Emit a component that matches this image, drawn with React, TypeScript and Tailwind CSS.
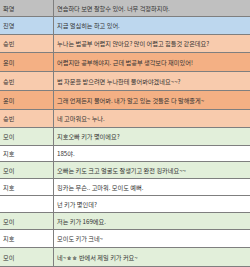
type Row = {
  who: string;
  line: string;
  tone: string;
};

const rows: Row[] = [
  { who: "화영", line: "연습하다 보면 잘할수 있어. 너무 걱정하지마.", tone: "bg-[#c0c0c0] h-[17px]" },
  { who: "진영", line: "지금 열심히는 하고 있어.", tone: "bg-[#bdd7ee] h-[18px]" },
  { who: "승빈", line: "누나는 법공부 어렵지 않아요? 많이 어렵고 힘들것 같은데요?", tone: "bg-[#f8cbad] h-[18px]" },
  { who: "윤미", line: "어렵지만 공부해야지. 근데 법공부 생각보다 재미있어!", tone: "bg-[#f4b084] h-[19px]" },
  { who: "승빈", line: "법 자문을 받으려면 누나한테 물어봐야겠네요~~?", tone: "bg-[#f8cbad] h-[19px]" },
  { who: "윤미", line: "그래 언제든지 물어봐. 내가 알고 있는 것들은 다 말해줄게~", tone: "bg-[#f4b084] h-[19px]" },
  { who: "승빈", line: "네 고마워요~ 누나.", tone: "bg-[#f8cbad] h-[18px]" },
  { who: "모이", line: "지호오빠 키가 몇이에요?", tone: "bg-[#e2efda] h-[18px]" },
  { who: "지호", line: "185야.", tone: "bg-white h-[16px]" },
  { who: "모이", line: "오빠는 키도 크고 얼굴도 잘생기고 완전 킹카네요~~", tone: "bg-[#e2efda] h-[17px]" },
  { who: "지호", line: "킹카는 무슨.. 고마워. 모이도 예뻐.", tone: "bg-white h-[17px]" },
  { who: "", line: "넌  키가 몇인데?", tone: "bg-white h-[17px]" },
  { who: "모이", line: "저는 키가 169에요.", tone: "bg-[#e2efda] h-[17px]" },
  { who: "지호", line: "모이도 키가 크네~", tone: "bg-white h-[18px]" },
  { who: "모이", line: "네~ㅎㅎ 반에서 제일 키가 커요~", tone: "bg-[#e2efda] h-[19px]" },
];

const ChatRow = ({ who, line, tone }: Row) => {
  return (
    <div className={`flex items-center border-b border-[#7f7f7f] ${tone}`}>
      <div className="flex h-full w-[54px] shrink-0 items-center border-r border-[#7f7f7f] pl-[3px]">
        {who}
      </div>
      <div className="whitespace-nowrap pl-[3px]">{line}</div>
    </div>
  );
}

export default function App() {
  return (
    <main className="h-[267px] w-[250px] overflow-hidden bg-white font-['Noto_Sans_CJK_KR','Noto_Sans',sans-serif] text-[6.2px] leading-[9px] text-[#333333]">
      {rows.map((row, index) => (
        <ChatRow key={index} {...row} />
      ))}
    </main>
  );
}
